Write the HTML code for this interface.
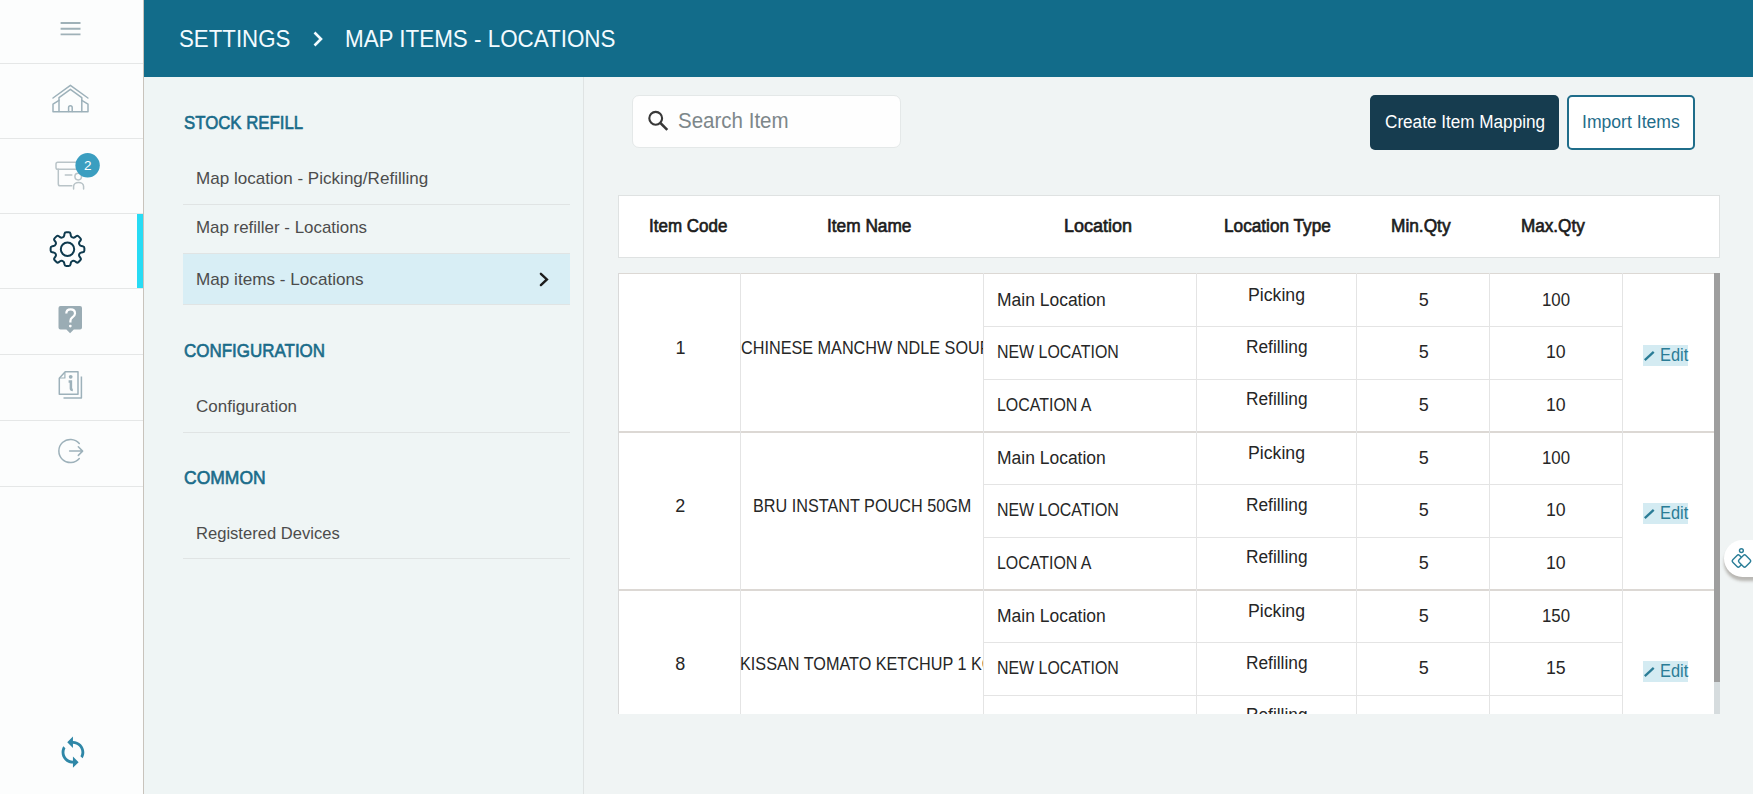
<!DOCTYPE html>
<html><head><meta charset="utf-8"><title>Map Items - Locations</title>
<style>
html,body{margin:0;padding:0;}
body{width:1753px;height:794px;overflow:hidden;position:relative;background:#f0f4f4;font-family:"Liberation Sans", sans-serif;}
.t{position:absolute;white-space:nowrap;}
.b{position:absolute;}
</style></head><body>
<div class="b" style="left:0px;top:0px;width:143px;height:794px;background:#fcfdfd;"></div>
<div class="b" style="left:143px;top:0px;width:1px;height:794px;background:#c8c3bc;"></div>
<div class="b" style="left:0px;top:63px;width:143px;height:1px;background:#e5e7e7;"></div>
<div class="b" style="left:0px;top:138px;width:143px;height:1px;background:#e5e7e7;"></div>
<div class="b" style="left:0px;top:213px;width:143px;height:1px;background:#e5e7e7;"></div>
<div class="b" style="left:0px;top:288px;width:143px;height:1px;background:#e5e7e7;"></div>
<div class="b" style="left:0px;top:354px;width:143px;height:1px;background:#e5e7e7;"></div>
<div class="b" style="left:0px;top:420px;width:143px;height:1px;background:#e5e7e7;"></div>
<div class="b" style="left:0px;top:486px;width:143px;height:1px;background:#e5e7e7;"></div>
<div class="b" style="left:137px;top:214px;width:6px;height:74px;background:#27dbf4;"></div>
<svg class="b" style="left:0;top:0" width="143" height="63"><g stroke="#9fb1b8" stroke-width="1.9"><path d="M60.6 23 H80.5 M60.6 28.7 H80.5 M60.6 34.4 H80.5"/></g></svg>
<svg class="b" style="left:0;top:0" width="143" height="794">
<g fill="none" stroke="#9db1ba" stroke-width="1.5" stroke-linejoin="round" stroke-linecap="round">
<path d="M53 98 L70.4 85.3 L87.9 98"/>
<path d="M59 111.5 V97.6 L70.4 89.3 L81.8 97.6 V111.5"/>
<path d="M59 100.4 L53 104.2 V111.8 H88 V104.2 L81.8 100.4"/>
<path d="M68.6 111.5 V107.5 A1.8 1.8 0 0 1 72.2 107.5 V111.5"/>
</g>
<g fill="none" stroke="#b9c4c8" stroke-width="1.5" stroke-linecap="round" stroke-linejoin="round">
<path d="M58.3 169.3 V184 A1.8 1.8 0 0 0 60.1 185.8 H71.8"/>
<rect x="56" y="162.3" width="22" height="7" rx="1.8"/>
<path d="M65.3 175 H71.8"/>
<circle cx="78.2" cy="176.6" r="3.3"/>
<path d="M73.6 189 V186.6 A5 4.2 0 0 1 83.6 186.6 V189"/>
</g>
<circle cx="87.6" cy="165.3" r="12.2" fill="#3b9ec0"/>
<text x="87.8" y="170.2" font-family="Liberation Sans" font-size="13.5" font-weight="400" fill="#fff" text-anchor="middle">2</text>
<path transform="translate(67.5 249.2)" d="M-3.25 -13.85 L-3.05 -15.28 Q-2.82 -16.87 -1.22 -16.87 L1.22 -16.87 Q2.82 -16.87 3.05 -15.28 L3.25 -13.85 Q3.45 -12.43 4.77 -11.88 L5.03 -11.77 Q6.35 -11.23 7.49 -12.09 L8.65 -12.96 Q9.93 -13.92 11.06 -12.79 L12.79 -11.06 Q13.92 -9.93 12.96 -8.65 L12.09 -7.49 Q11.23 -6.35 11.77 -5.03 L11.88 -4.77 Q12.43 -3.45 13.85 -3.25 L15.28 -3.05 Q16.87 -2.82 16.87 -1.22 L16.87 1.22 Q16.87 2.82 15.28 3.05 L13.85 3.25 Q12.43 3.45 11.88 4.77 L11.77 5.03 Q11.23 6.35 12.09 7.49 L12.96 8.65 Q13.92 9.93 12.79 11.06 L11.06 12.79 Q9.93 13.92 8.65 12.96 L7.49 12.09 Q6.35 11.23 5.03 11.77 L4.77 11.88 Q3.45 12.43 3.25 13.85 L3.05 15.28 Q2.82 16.87 1.22 16.87 L-1.22 16.87 Q-2.82 16.87 -3.05 15.28 L-3.25 13.85 Q-3.45 12.43 -4.77 11.88 L-5.03 11.77 Q-6.35 11.23 -7.49 12.09 L-8.65 12.96 Q-9.93 13.92 -11.06 12.79 L-12.79 11.06 Q-13.92 9.93 -12.96 8.65 L-12.09 7.49 Q-11.23 6.35 -11.77 5.03 L-11.88 4.77 Q-12.43 3.45 -13.85 3.25 L-15.28 3.05 Q-16.87 2.82 -16.87 1.22 L-16.87 -1.22 Q-16.87 -2.82 -15.28 -3.05 L-13.85 -3.25 Q-12.43 -3.45 -11.88 -4.77 L-11.77 -5.03 Q-11.23 -6.35 -12.09 -7.49 L-12.96 -8.65 Q-13.92 -9.93 -12.79 -11.06 L-11.06 -12.79 Q-9.93 -13.92 -8.65 -12.96 L-7.49 -12.09 Q-6.35 -11.23 -5.03 -11.77 L-4.77 -11.88 Q-3.45 -12.43 -3.25 -13.85Z" fill="none" stroke="#0e3a4e" stroke-width="2" stroke-linejoin="round"/>
<circle cx="67.5" cy="249.2" r="6.7" fill="none" stroke="#0e3a4e" stroke-width="2"/>
<path d="M60.5 305.9 H80 A2 2 0 0 1 82 307.9 V327.6 A2 2 0 0 1 80 329.6 H73.8 L70.1 333.3 L66.4 329.6 H60.5 A2 2 0 0 1 58.5 327.6 V307.9 A2 2 0 0 1 60.5 305.9Z" fill="#9aacb4"/>
<path d="M66.3 313.6 C66.3 310.6 68.2 309.4 70.6 309.4 C73.2 309.4 75 311 75 313.4 C75 315.6 73.6 316.5 72.2 317.5 C70.9 318.4 70.4 319.3 70.4 321 V322.4" fill="none" stroke="#fff" stroke-width="2.2"/><circle cx="70.3" cy="326.1" r="1.4" fill="#fff"/>
<g fill="none" stroke="#9db1ba" stroke-width="1.5" stroke-linejoin="round">
<path d="M65.2 371.8 H78 V394.2 H59.3 V378.2 Z"/><path d="M59.6 378 H64.9 V372.2" stroke-width="1.2"/>
<path d="M81.4 376.5 V398 H63.5" />
</g>
<circle cx="70.7" cy="376.8" r="1.9" fill="#9db1ba"/>
<path d="M68.6 381.4 H70.9 V388.6 Q70.9 389.9 72.8 389.9" fill="none" stroke="#9db1ba" stroke-width="2.5"/>
<g fill="none" stroke="#9db1ba" stroke-width="1.5" stroke-linecap="round" stroke-linejoin="round">
<path d="M79.3 443.5 A11.6 11.6 0 1 0 79.3 458.5"/>
<path d="M69.6 451.1 H82.4 M78.3 446.8 L82.6 451.1 L78.3 455.4"/>
</g>
<path transform="translate(55.9 735.2) scale(1.42)" d="M12 4V1L8 5l4 4V6c3.31 0 6 2.69 6 6 0 1.010-.25 1.97-.7 2.8l1.46 1.46C19.54 15.03 20 13.57 20 12c0-4.42-3.580-8-8-8zm0 14c-3.31 0-6-2.69-6-6 0-1.01.25-1.97.7-2.8L5.24 7.74C4.46 8.97 4 10.43 4 12c0 4.42 3.58 8 8 8v3l4-4-4-4v3z" fill="#2f87a7"/>
</svg>
<div class="b" style="left:144px;top:0px;width:1609px;height:77px;background:#126c8a;"></div>
<div class="t" style="left:178.67px;top:26.78px;font-size:24px;line-height:24px;color:#f2fbff;font-weight:400;transform:scaleX(0.9279);transform-origin:0 0;">SETTINGS</div>
<svg class="b" style="left:310px;top:28px" width="16" height="22"><path d="M4.5 4.5 L11 11 L4.5 17.5" fill="none" stroke="#f2fbff" stroke-width="2.6"/></svg>
<div class="t" style="left:345.07px;top:26.78px;font-size:24px;line-height:24px;color:#f2fbff;font-weight:400;transform:scaleX(0.9332);transform-origin:0 0;">MAP ITEMS - LOCATIONS</div>
<div class="b" style="left:144px;top:77px;width:439px;height:717px;background:#eff5f5;"></div>
<div class="b" style="left:583px;top:77px;width:1px;height:717px;background:#dfe3e3;"></div>
<div class="t" style="left:183.60px;top:112.82px;font-size:19px;line-height:19px;color:#1a6c8a;font-weight:400;transform:scaleX(0.8835);transform-origin:0 0;-webkit-text-stroke:0.65px #1a6c8a;">STOCK REFILL</div>
<div class="t" style="left:195.60px;top:170.11px;font-size:17px;line-height:17px;color:#4c4c4c;font-weight:400;transform:scaleX(1.0033);transform-origin:0 0;">Map location - Picking/Refilling</div>
<div class="b" style="left:183px;top:204px;width:387px;height:1px;background:#e0e4e4;"></div>
<div class="t" style="left:195.61px;top:219.31px;font-size:17px;line-height:17px;color:#4c4c4c;font-weight:400;transform:scaleX(0.9944);transform-origin:0 0;">Map refiller - Locations</div>
<div class="b" style="left:183px;top:253px;width:387px;height:1px;background:#e0e4e4;"></div>
<div class="b" style="left:183px;top:254px;width:387px;height:50px;background:#d8eef5;"></div>
<div class="b" style="left:183px;top:304px;width:387px;height:1px;background:#e0e4e4;"></div>
<div class="t" style="left:195.59px;top:270.51px;font-size:17px;line-height:17px;color:#4c4c4c;font-weight:400;transform:scaleX(1.0080);transform-origin:0 0;">Map items - Locations</div>
<svg class="b" style="left:535px;top:268px" width="18" height="22"><path d="M5.9 5.8 L11.9 11.5 L5.9 17.1" fill="none" stroke="#1c1c1c" stroke-width="2.4" stroke-linecap="round" stroke-linejoin="miter"/></svg>
<div class="t" style="left:183.90px;top:340.62px;font-size:19px;line-height:19px;color:#1a6c8a;font-weight:400;transform:scaleX(0.8928);transform-origin:0 0;-webkit-text-stroke:0.65px #1a6c8a;">CONFIGURATION</div>
<div class="t" style="left:196.40px;top:398.01px;font-size:17px;line-height:17px;color:#4c4c4c;font-weight:400;transform:scaleX(0.9993);transform-origin:0 0;">Configuration</div>
<div class="b" style="left:183px;top:432px;width:387px;height:1px;background:#e0e4e4;"></div>
<div class="t" style="left:184.00px;top:467.92px;font-size:19px;line-height:19px;color:#1a6c8a;font-weight:400;transform:scaleX(0.9212);transform-origin:0 0;-webkit-text-stroke:0.65px #1a6c8a;">COMMON</div>
<div class="t" style="left:195.63px;top:524.71px;font-size:17px;line-height:17px;color:#4c4c4c;font-weight:400;transform:scaleX(0.9747);transform-origin:0 0;">Registered Devices</div>
<div class="b" style="left:183px;top:558px;width:387px;height:1px;background:#e0e4e4;"></div>
<div class="b" style="left:584px;top:77px;width:1169px;height:717px;background:#f0f4f4;"></div>
<div class="b" style="left:632px;top:95px;width:269px;height:53px;background:#fefefe;border:1px solid #e4e8e8;border-radius:7px;box-sizing:border-box;"></div>
<svg class="b" style="left:640px;top:105px" width="40" height="32"><circle cx="15.7" cy="13.3" r="6.4" fill="none" stroke="#383838" stroke-width="2.1"/><path d="M20.4 18 L27.3 24.9" stroke="#383838" stroke-width="2.5"/></svg>
<div class="t" style="left:677.82px;top:110.28px;font-size:22px;line-height:22px;color:#7d878a;font-weight:400;transform:scaleX(0.9327);transform-origin:0 0;">Search Item</div>
<div class="b" style="left:1370px;top:95px;width:189px;height:55px;background:#163c4f;border-radius:5px;"></div>
<div class="t" style="left:1385.30px;top:112.86px;font-size:18px;line-height:18px;color:#ffffff;font-weight:400;transform:scaleX(0.9523);transform-origin:0 0;">Create Item Mapping</div>
<div class="b" style="left:1567px;top:95px;width:128px;height:55px;background:#ffffff;border:2px solid #1f6d8a;border-radius:5px;box-sizing:border-box;"></div>
<div class="t" style="left:1582.22px;top:112.76px;font-size:18px;line-height:18px;color:#1f6d8a;font-weight:400;transform:scaleX(0.9776);transform-origin:0 0;">Import Items</div>
<div class="b" style="left:618px;top:195px;width:1102px;height:63px;background:#ffffff;border:1px solid #dfe2e2;box-sizing:border-box;"></div>
<div class="t" style="left:649.46px;top:216.76px;font-size:18px;line-height:18px;color:#1c1c1c;font-weight:400;transform:scaleX(0.9436);transform-origin:0 0;-webkit-text-stroke:0.65px #1c1c1c;">Item Code</div>
<div class="t" style="left:826.74px;top:216.76px;font-size:18px;line-height:18px;color:#1c1c1c;font-weight:400;transform:scaleX(0.9596);transform-origin:0 0;-webkit-text-stroke:0.65px #1c1c1c;">Item Name</div>
<div class="t" style="left:1063.90px;top:216.76px;font-size:18px;line-height:18px;color:#1c1c1c;font-weight:400;transform:scaleX(0.9993);transform-origin:0 0;-webkit-text-stroke:0.65px #1c1c1c;">Location</div>
<div class="t" style="left:1224.14px;top:216.76px;font-size:18px;line-height:18px;color:#1c1c1c;font-weight:400;transform:scaleX(0.9562);transform-origin:0 0;-webkit-text-stroke:0.65px #1c1c1c;">Location Type</div>
<div class="t" style="left:1390.94px;top:216.76px;font-size:18px;line-height:18px;color:#1c1c1c;font-weight:400;transform:scaleX(0.9605);transform-origin:0 0;-webkit-text-stroke:0.65px #1c1c1c;">Min.Qty</div>
<div class="t" style="left:1520.85px;top:216.76px;font-size:18px;line-height:18px;color:#1c1c1c;font-weight:400;transform:scaleX(0.9514);transform-origin:0 0;-webkit-text-stroke:0.65px #1c1c1c;">Max.Qty</div>
<div class="b" style="left:618px;top:273px;width:1102px;height:441px;overflow:hidden;background:#fff;">
<div class="b" style="left:0px;top:0px;width:1102px;height:1px;background:#dcd8d4;"></div>
<div class="b" style="left:0px;top:0px;width:1px;height:160px;background:#d9d9d9;"></div>
<div class="b" style="left:122px;top:0px;width:1px;height:160px;background:#e4e4e4;"></div>
<div class="b" style="left:365px;top:0px;width:1px;height:160px;background:#e4e4e4;"></div>
<div class="b" style="left:578px;top:0px;width:1px;height:160px;background:#e4e4e4;"></div>
<div class="b" style="left:738px;top:0px;width:1px;height:160px;background:#e4e4e4;"></div>
<div class="b" style="left:871px;top:0px;width:1px;height:160px;background:#e4e4e4;"></div>
<div class="b" style="left:1004px;top:0px;width:1px;height:160px;background:#e4e4e4;"></div>
<div class="b" style="left:366px;top:53px;width:638px;height:1px;background:#e4e4e4;"></div>
<div class="b" style="left:366px;top:106px;width:638px;height:1px;background:#e4e4e4;"></div>
<div class="t" style="left:57.50px;top:65.66px;font-size:18px;line-height:18px;color:#262626;font-weight:400;letter-spacing:0.000px;">1</div>
<div class="b" style="left:123.30px;top:65.66px;width:241.70px;height:23.4px;overflow:hidden;"><div class="t" style="left:0.00px;top:0;font-size:18px;line-height:18px;color:#262626;font-weight:400;transform:scaleX(0.9007);transform-origin:0 0;">CHINESE MANCHW NDLE SOUP</div></div>
<div class="t" style="left:379.33px;top:17.96px;font-size:18px;line-height:18px;color:#262626;font-weight:400;transform:scaleX(0.9704);transform-origin:0 0;">Main Location</div>
<div class="t" style="left:630.02px;top:12.96px;font-size:18px;line-height:18px;color:#262626;font-weight:400;transform:scaleX(0.9819);transform-origin:0 0;">Picking</div>
<div class="t" style="left:800.70px;top:17.96px;font-size:18px;line-height:18px;color:#262626;font-weight:400;letter-spacing:0.000px;">5</div>
<div class="t" style="left:923.52px;top:17.96px;font-size:18px;line-height:18px;color:#262626;font-weight:400;transform:scaleX(0.9338);transform-origin:0 0;">100</div>
<div class="t" style="left:379.42px;top:70.06px;font-size:18px;line-height:18px;color:#262626;font-weight:400;transform:scaleX(0.8848);transform-origin:0 0;">NEW LOCATION</div>
<div class="t" style="left:627.74px;top:64.56px;font-size:18px;line-height:18px;color:#262626;font-weight:400;transform:scaleX(0.9610);transform-origin:0 0;">Refilling</div>
<div class="t" style="left:800.70px;top:70.06px;font-size:18px;line-height:18px;color:#262626;font-weight:400;letter-spacing:0.000px;">5</div>
<div class="t" style="left:927.67px;top:70.06px;font-size:18px;line-height:18px;color:#262626;font-weight:400;transform:scaleX(0.9837);transform-origin:0 0;">10</div>
<div class="t" style="left:379.41px;top:122.56px;font-size:18px;line-height:18px;color:#262626;font-weight:400;transform:scaleX(0.8854);transform-origin:0 0;">LOCATION A</div>
<div class="t" style="left:627.74px;top:117.46px;font-size:18px;line-height:18px;color:#262626;font-weight:400;transform:scaleX(0.9610);transform-origin:0 0;">Refilling</div>
<div class="t" style="left:800.70px;top:122.56px;font-size:18px;line-height:18px;color:#262626;font-weight:400;letter-spacing:0.000px;">5</div>
<div class="t" style="left:927.67px;top:122.56px;font-size:18px;line-height:18px;color:#262626;font-weight:400;transform:scaleX(0.9837);transform-origin:0 0;">10</div>
<div class="b" style="left:1025px;top:71.6px;width:45px;height:21.1px;background:#d4ebf2;"></div>
<svg class="b" style="left:1025px;top:71.6px" width="14" height="21"><path d="M1.8 15.2 L10.7 6.9" stroke="#2a7c96" stroke-width="2.3" stroke-linecap="butt"/></svg>
<div class="t" style="left:1041.79px;top:72.66px;font-size:18px;line-height:18px;color:#2a7c96;font-weight:400;transform:scaleX(0.9095);transform-origin:0 0;">Edit</div>
<div class="b" style="left:0px;top:158px;width:1102px;height:2px;background:#dcd8d4;"></div>
<div class="b" style="left:0px;top:158px;width:1px;height:160px;background:#d9d9d9;"></div>
<div class="b" style="left:122px;top:158px;width:1px;height:160px;background:#e4e4e4;"></div>
<div class="b" style="left:365px;top:158px;width:1px;height:160px;background:#e4e4e4;"></div>
<div class="b" style="left:578px;top:158px;width:1px;height:160px;background:#e4e4e4;"></div>
<div class="b" style="left:738px;top:158px;width:1px;height:160px;background:#e4e4e4;"></div>
<div class="b" style="left:871px;top:158px;width:1px;height:160px;background:#e4e4e4;"></div>
<div class="b" style="left:1004px;top:158px;width:1px;height:160px;background:#e4e4e4;"></div>
<div class="b" style="left:366px;top:211px;width:638px;height:1px;background:#e4e4e4;"></div>
<div class="b" style="left:366px;top:264px;width:638px;height:1px;background:#e4e4e4;"></div>
<div class="t" style="left:57.20px;top:223.66px;font-size:18px;line-height:18px;color:#262626;font-weight:400;letter-spacing:0.000px;">2</div>
<div class="t" style="left:134.70px;top:223.66px;font-size:18px;line-height:18px;color:#262626;font-weight:400;transform:scaleX(0.9007);transform-origin:0 0;">BRU INSTANT POUCH 50GM</div>
<div class="t" style="left:379.33px;top:175.96px;font-size:18px;line-height:18px;color:#262626;font-weight:400;transform:scaleX(0.9704);transform-origin:0 0;">Main Location</div>
<div class="t" style="left:630.02px;top:170.96px;font-size:18px;line-height:18px;color:#262626;font-weight:400;transform:scaleX(0.9819);transform-origin:0 0;">Picking</div>
<div class="t" style="left:800.70px;top:175.96px;font-size:18px;line-height:18px;color:#262626;font-weight:400;letter-spacing:0.000px;">5</div>
<div class="t" style="left:923.52px;top:175.96px;font-size:18px;line-height:18px;color:#262626;font-weight:400;transform:scaleX(0.9338);transform-origin:0 0;">100</div>
<div class="t" style="left:379.42px;top:228.06px;font-size:18px;line-height:18px;color:#262626;font-weight:400;transform:scaleX(0.8848);transform-origin:0 0;">NEW LOCATION</div>
<div class="t" style="left:627.74px;top:222.56px;font-size:18px;line-height:18px;color:#262626;font-weight:400;transform:scaleX(0.9610);transform-origin:0 0;">Refilling</div>
<div class="t" style="left:800.70px;top:228.06px;font-size:18px;line-height:18px;color:#262626;font-weight:400;letter-spacing:0.000px;">5</div>
<div class="t" style="left:927.67px;top:228.06px;font-size:18px;line-height:18px;color:#262626;font-weight:400;transform:scaleX(0.9837);transform-origin:0 0;">10</div>
<div class="t" style="left:379.41px;top:280.56px;font-size:18px;line-height:18px;color:#262626;font-weight:400;transform:scaleX(0.8854);transform-origin:0 0;">LOCATION A</div>
<div class="t" style="left:627.74px;top:275.46px;font-size:18px;line-height:18px;color:#262626;font-weight:400;transform:scaleX(0.9610);transform-origin:0 0;">Refilling</div>
<div class="t" style="left:800.70px;top:280.56px;font-size:18px;line-height:18px;color:#262626;font-weight:400;letter-spacing:0.000px;">5</div>
<div class="t" style="left:927.67px;top:280.56px;font-size:18px;line-height:18px;color:#262626;font-weight:400;transform:scaleX(0.9837);transform-origin:0 0;">10</div>
<div class="b" style="left:1025px;top:229.6px;width:45px;height:21.1px;background:#d4ebf2;"></div>
<svg class="b" style="left:1025px;top:229.6px" width="14" height="21"><path d="M1.8 15.2 L10.7 6.9" stroke="#2a7c96" stroke-width="2.3" stroke-linecap="butt"/></svg>
<div class="t" style="left:1041.79px;top:230.66px;font-size:18px;line-height:18px;color:#2a7c96;font-weight:400;transform:scaleX(0.9095);transform-origin:0 0;">Edit</div>
<div class="b" style="left:0px;top:316px;width:1102px;height:2px;background:#dcd8d4;"></div>
<div class="b" style="left:0px;top:316px;width:1px;height:160px;background:#d9d9d9;"></div>
<div class="b" style="left:122px;top:316px;width:1px;height:160px;background:#e4e4e4;"></div>
<div class="b" style="left:365px;top:316px;width:1px;height:160px;background:#e4e4e4;"></div>
<div class="b" style="left:578px;top:316px;width:1px;height:160px;background:#e4e4e4;"></div>
<div class="b" style="left:738px;top:316px;width:1px;height:160px;background:#e4e4e4;"></div>
<div class="b" style="left:871px;top:316px;width:1px;height:160px;background:#e4e4e4;"></div>
<div class="b" style="left:1004px;top:316px;width:1px;height:160px;background:#e4e4e4;"></div>
<div class="b" style="left:366px;top:369px;width:638px;height:1px;background:#e4e4e4;"></div>
<div class="b" style="left:366px;top:422px;width:638px;height:1px;background:#e4e4e4;"></div>
<div class="t" style="left:57.20px;top:381.66px;font-size:18px;line-height:18px;color:#262626;font-weight:400;letter-spacing:0.000px;">8</div>
<div class="b" style="left:123.30px;top:381.66px;width:241.70px;height:23.4px;overflow:hidden;"><div class="t" style="left:-0.90px;top:0;font-size:18px;line-height:18px;color:#262626;font-weight:400;transform:scaleX(0.9007);transform-origin:0 0;">KISSAN TOMATO KETCHUP 1 KG</div></div>
<div class="t" style="left:379.33px;top:333.96px;font-size:18px;line-height:18px;color:#262626;font-weight:400;transform:scaleX(0.9704);transform-origin:0 0;">Main Location</div>
<div class="t" style="left:630.02px;top:328.96px;font-size:18px;line-height:18px;color:#262626;font-weight:400;transform:scaleX(0.9819);transform-origin:0 0;">Picking</div>
<div class="t" style="left:800.70px;top:333.96px;font-size:18px;line-height:18px;color:#262626;font-weight:400;letter-spacing:0.000px;">5</div>
<div class="t" style="left:923.52px;top:333.96px;font-size:18px;line-height:18px;color:#262626;font-weight:400;transform:scaleX(0.9338);transform-origin:0 0;">150</div>
<div class="t" style="left:379.42px;top:386.06px;font-size:18px;line-height:18px;color:#262626;font-weight:400;transform:scaleX(0.8848);transform-origin:0 0;">NEW LOCATION</div>
<div class="t" style="left:627.74px;top:380.56px;font-size:18px;line-height:18px;color:#262626;font-weight:400;transform:scaleX(0.9610);transform-origin:0 0;">Refilling</div>
<div class="t" style="left:800.70px;top:386.06px;font-size:18px;line-height:18px;color:#262626;font-weight:400;letter-spacing:0.000px;">5</div>
<div class="t" style="left:927.67px;top:386.06px;font-size:18px;line-height:18px;color:#262626;font-weight:400;transform:scaleX(0.9837);transform-origin:0 0;">15</div>
<div class="t" style="left:379.41px;top:438.56px;font-size:18px;line-height:18px;color:#262626;font-weight:400;transform:scaleX(0.8854);transform-origin:0 0;">LOCATION A</div>
<div class="t" style="left:627.74px;top:433.46px;font-size:18px;line-height:18px;color:#262626;font-weight:400;transform:scaleX(0.9610);transform-origin:0 0;">Refilling</div>
<div class="t" style="left:800.70px;top:438.56px;font-size:18px;line-height:18px;color:#262626;font-weight:400;letter-spacing:0.000px;">5</div>
<div class="t" style="left:927.67px;top:438.56px;font-size:18px;line-height:18px;color:#262626;font-weight:400;transform:scaleX(0.9837);transform-origin:0 0;">15</div>
<div class="b" style="left:1025px;top:387.6px;width:45px;height:21.1px;background:#d4ebf2;"></div>
<svg class="b" style="left:1025px;top:387.6px" width="14" height="21"><path d="M1.8 15.2 L10.7 6.9" stroke="#2a7c96" stroke-width="2.3" stroke-linecap="butt"/></svg>
<div class="t" style="left:1041.79px;top:388.66px;font-size:18px;line-height:18px;color:#2a7c96;font-weight:400;transform:scaleX(0.9095);transform-origin:0 0;">Edit</div>
<div class="b" style="left:1096px;top:0px;width:6px;height:441px;background:#d6dcde;"></div>
<div class="b" style="left:1096px;top:0px;width:6px;height:409px;background:#9e9e9e;"></div>
</div>
<div class="b" style="left:1724px;top:540px;width:60px;height:37px;border-radius:19px;background:#fff;box-shadow:0 4px 3px rgba(110,100,90,0.42);"></div>
<svg class="b" style="left:1724px;top:540px" width="29" height="37"><g stroke="#2b7e98" stroke-width="1.45" stroke-linejoin="round">
<path d="M15.57 15.47 L19.83 19.73 Q21.10 21.00 19.83 22.27 L15.57 26.53 Q14.30 27.80 13.03 26.53 L8.77 22.27 Q7.50 21.00 8.77 19.73 L13.03 15.47 Q14.30 14.20 15.57 15.47Z" fill="none"/><path d="M21.87 15.47 L26.13 19.73 Q27.40 21.00 26.13 22.27 L21.87 26.53 Q20.60 27.80 19.33 26.53 L15.07 22.27 Q13.80 21.00 15.07 19.73 L19.33 15.47 Q20.60 14.20 21.87 15.47Z" fill="#fff"/><circle cx="17.4" cy="10.6" r="1.9" fill="none"/></g></svg>

</body></html>
